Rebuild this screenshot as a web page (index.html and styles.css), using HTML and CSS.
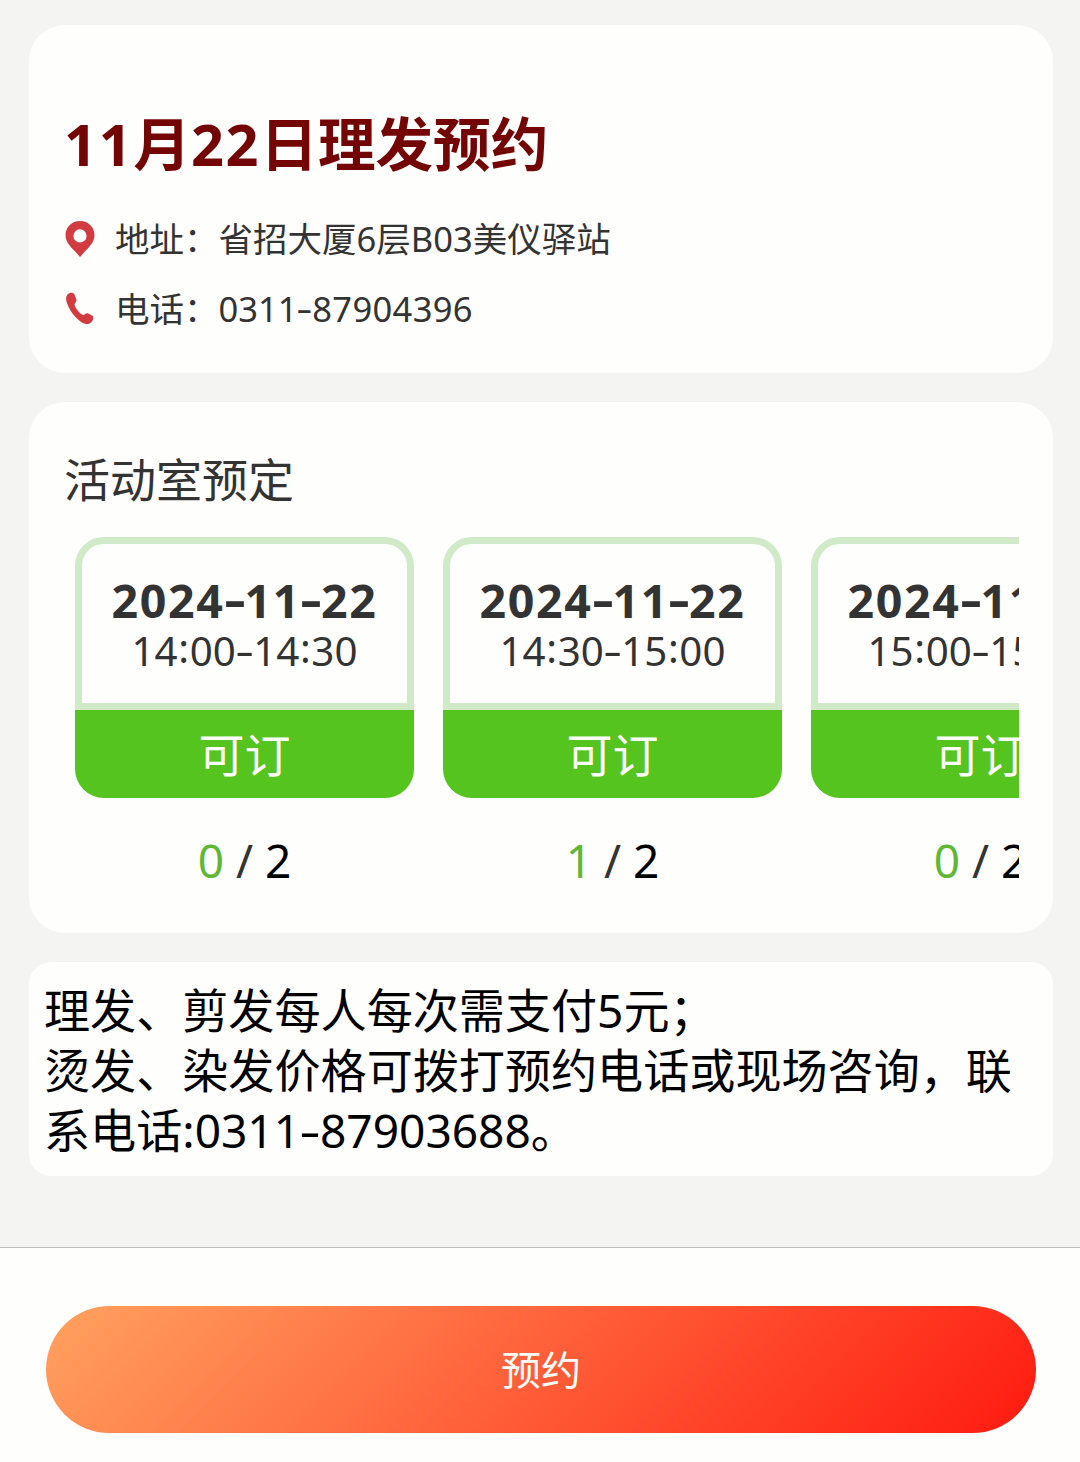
FILE: index.html
```html
<!doctype html>
<html lang="zh-CN">

<head>
	<meta charset="UTF-8">
	<title>理发预约</title>
	<link rel="stylesheet" href="styles.css">
</head>

<body>
	<main class="page">
		<section class="card info">
			<h1><span class="num">11</span>月<span class="num">22</span>日理发预约</h1>
			<p class="row">
				<svg class="icon" viewBox="0 0 32 38">
					<path fill="#d23c40" fill-rule="evenodd" d="M16 1C7.500 1 1.500 7.300 1.500 15.300C1.500 23 8 28 12.500 33L16 37L19.500 33C24 28 30.500 23 30.500 15.300C30.500 7.300 24.500 1 16 1ZM16 9.300A6.600 6.600 0 1 1 16 22.500A6.600 6.600 0 1 1 16 9.300Z"/>
				</svg>
				<span>地址：省招大厦6层B03美仪驿站</span>
			</p>
			<p class="row">
				<svg class="icon" viewBox="0 0 32 38">
					<path fill="#d23c40" d="M3.500 4.500C5.500 2 9.500 2 10.500 4.500L12.500 10C13 12 10.800 12.800 10.500 14.500C11 17.500 15.500 23.500 18.500 24.800C20.500 25.500 21.500 22.800 23.700 23.300L28 25.500C30 26.800 29.500 30 27.500 32C25 34.700 21.500 34.500 18 32.500C10.500 27.800 4.500 19 2.500 11.500C1.800 8.500 1.900 6.200 3.500 4.500Z"/>
				</svg>
				<span>电话：0311<i class="dash">-</i><span class="digits">87904396</span></span>
			</p>
		</section>

		<section class="card booking">
			<h2>活动室预定</h2>
			<div class="slots">
				<div class="slot">
					<div class="when">
						<b>2024<i class="dash">-</i>11<i class="dash">-</i>22</b>
						<span>14<i class="colon">:</i>00<i class="dash">-</i>14<i class="colon">:</i>30</span>
					</div>
					<div class="state">可订</div>
					<div class="count"><em>0</em> / <strong>2</strong></div>
				</div>
				<div class="slot">
					<div class="when">
						<b>2024<i class="dash">-</i>11<i class="dash">-</i>22</b>
						<span>14<i class="colon">:</i>30<i class="dash">-</i>15<i class="colon">:</i>00</span>
					</div>
					<div class="state">可订</div>
					<div class="count"><em>1</em> / <strong>2</strong></div>
				</div>
				<div class="slot">
					<div class="when">
						<b>2024<i class="dash">-</i>11<i class="dash">-</i>22</b>
						<span>15<i class="colon">:</i>00<i class="dash">-</i>15<i class="colon">:</i>30</span>
					</div>
					<div class="state">可订</div>
					<div class="count"><em>0</em> / <strong>2</strong></div>
				</div>
			</div>
		</section>

		<section class="card notice">
			理发、剪发每人每次需支付5元；<br>
			烫发、染发价格可拨打预约电话或现场咨询，联系电话:0311<i class="dash">-</i>87903688。
		</section>
	</main>

	<footer class="bar">
		<button class="submit">预约</button>
	</footer>
</body>

</html>
```

FILE: styles.css
```css
* {
	box-sizing: border-box;
}

body {
	display: flex;
	flex-direction: column;
	height: 1462px;
	margin: 0;
	overflow: hidden;
	background: #f4f5f2;
	color: #333;
	font-family: "Noto Sans", "Noto Sans CJK SC", sans-serif;
}

h1, h2, p {
	margin: 0;
	font-weight: normal;
}

i, em {
	font-style: normal;
}

.page {
	display: flex;
	flex-direction: column;
	gap: 29px;
	flex: 1;
	padding: 25px 27px 0 29px;
}

.card {
	border-radius: 36px;
	background: #fefefd;
}

/* the hyphen is drawn wider than the font's own */
.dash {
	display: inline-block;
	width: .43em;
	line-height: 1;
	letter-spacing: 0;
	text-align: center;
	vertical-align: .03em;
	transform: scaleX(1.45);
}

.colon {
	display: inline-block;
	width: .3em;
	line-height: 1;
	text-align: center;
	vertical-align: .08em;
}

.info {
	height: 348px;
	padding: 79px 35px 0;
}

.info h1 {
	margin-bottom: 27px;
	color: #730505;
	font-size: 57.6px;
	font-weight: bold;
	line-height: 80px;
}

.num {
	letter-spacing: .03em;
}

.row {
	display: flex;
	align-items: center;
	height: 56px;
	margin-bottom: 14px;
	font-size: 34.5px;
	line-height: 56px;
}

.digits {
	letter-spacing: .01em;
}

.icon {
	width: 32px;
	height: 38px;
	margin-right: 19px;
}

.booking {
	height: 531px;
	padding: 43px 34px 0 35px;
}

.booking h2 {
	font-size: 46px;
	line-height: 68px;
}

.slots {
	display: flex;
	gap: 29px;
	margin-top: 24px;
	padding-left: 11px;
	overflow: hidden;
}

.slot {
	flex: none;
	width: 339px;
	text-align: center;
}

.when {
	display: flex;
	flex-direction: column;
	height: 173px;
	padding-top: 28px;
	border: 7px solid #d0eac8;
	border-radius: 29px 29px 0 0;
}

.when b {
	font-size: 46.5px;
	line-height: 56px;
	letter-spacing: .035em;
}

.when span {
	font-size: 40.3px;
	line-height: 46px;
}

.state {
	height: 88px;
	border-radius: 0 0 29px 29px;
	background: #55c41e;
	color: #fefefd;
	font-size: 46px;
	line-height: 88px;
}

.count {
	height: 100px;
	padding-top: 28px;
	font-size: 46px;
	line-height: 68px;
}

.count em {
	color: #5fb737;
}

.count strong {
	color: #000;
	font-weight: normal;
}

.notice {
	height: 214px;
	padding: 19px 15px;
	border-radius: 22px;
	color: #000;
	font-size: 46.1px;
	line-height: 60px;
}

.bar {
	height: 215px;
	padding: 58px 44px 0 46px;
	border-top: 1px solid #bfbfbf;
	background: #fefefd;
}

.submit {
	width: 100%;
	height: 127px;
	padding: 0 0 3px;
	border: none;
	border-radius: 64px;
	background: linear-gradient(135deg, #ffa260, #ff1a10);
	color: #fefefd;
	font: 40px "Noto Sans", "Noto Sans CJK SC", sans-serif;
}
```
